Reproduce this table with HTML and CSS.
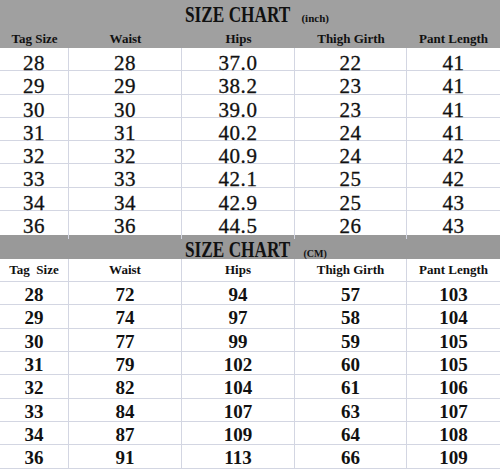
FILE: index.html
```html
<!DOCTYPE html>
<html>
<head>
<meta charset="utf-8">
<link rel="stylesheet" href="styles.css">
</head>
<body>
<section class="chart inch">
  <div class="band">
    <div class="title"><span class="big">SIZE CHART</span><span class="unit">(inch)</span></div>
    <div class="heads">
      <div>Tag Size</div><div>Waist</div><div>Hips</div><div>Thigh Girth</div><div>Pant Length</div>
    </div>
  </div>
  <div class="rows">
    <div class="row"><div>28</div><div>28</div><div>37.0</div><div>22</div><div>41</div></div>
    <div class="row"><div>29</div><div>29</div><div>38.2</div><div>23</div><div>41</div></div>
    <div class="row"><div>30</div><div>30</div><div>39.0</div><div>23</div><div>41</div></div>
    <div class="row"><div>31</div><div>31</div><div>40.2</div><div>24</div><div>41</div></div>
    <div class="row"><div>32</div><div>32</div><div>40.9</div><div>24</div><div>42</div></div>
    <div class="row"><div>33</div><div>33</div><div>42.1</div><div>25</div><div>42</div></div>
    <div class="row"><div>34</div><div>34</div><div>42.9</div><div>25</div><div>43</div></div>
    <div class="row"><div>36</div><div>36</div><div>44.5</div><div>26</div><div>43</div></div>
  </div>
</section>
<section class="chart cm">
  <div class="band">
    <div class="title"><span class="big">SIZE CHART</span><span class="unit">(CM)</span></div>
  </div>
  <div class="heads">
    <div>Tag&nbsp; Size</div><div>Waist</div><div>Hips</div><div>Thigh Girth</div><div>Pant Length</div>
  </div>
  <div class="rows">
    <div class="row"><div>28</div><div>72</div><div>94</div><div>57</div><div>103</div></div>
    <div class="row"><div>29</div><div>74</div><div>97</div><div>58</div><div>104</div></div>
    <div class="row"><div>30</div><div>77</div><div>99</div><div>59</div><div>105</div></div>
    <div class="row"><div>31</div><div>79</div><div>102</div><div>60</div><div>105</div></div>
    <div class="row"><div>32</div><div>82</div><div>104</div><div>61</div><div>106</div></div>
    <div class="row"><div>33</div><div>84</div><div>107</div><div>63</div><div>107</div></div>
    <div class="row"><div>34</div><div>87</div><div>109</div><div>64</div><div>108</div></div>
    <div class="row"><div>36</div><div>91</div><div>113</div><div>66</div><div>109</div></div>
  </div>
</section>
</body>
</html>
```
FILE: styles.css
```css
* { box-sizing: border-box; margin: 0; padding: 0; }
html, body { width: 500px; height: 469px; overflow: hidden; background: #fff; }
body { font-family: "Liberation Serif", "Times New Roman", serif; color: #111; }

.chart { width: 500px; }

.band { background: #a0a0a0; }
.cm .band { background: #999999; }

.title {
  height: 30px;
  display: flex;
  align-items: baseline;
  padding-left: 185px;
  padding-top: 4px;
  font-weight: bold;
  line-height: 22px;
  white-space: pre;
}
.big {
  display: inline-block;
  font-size: 23px;
  transform: scaleX(0.75);
  transform-origin: 0 0;
  margin-right: -24px;
}
.unit { font-size: 11px; }

.cm .band { height: 24px; }
.cm .title { height: 24px; padding-top: 4px; }
.cm .unit { font-size: 10px; margin-left: 2px; }

.heads, .row {
  display: grid;
  grid-template-columns: 69px 113px 113px 112px 93px;
}
.heads > div, .row > div {
  display: flex;
  align-items: center;
  justify-content: center;
}
.heads { height: 18px; font-size: 13px; font-weight: bold; }
.heads > div { padding-bottom: 1px; }

.cm .heads { height: 23px; border-bottom: 1px solid #d3d6e2; }
.cm .heads > div { border-right: 1px solid #d3d6e2; padding-bottom: 0; }
.cm .heads > div:last-child { border-right: 0; }

.row {
  height: 23.25px;
  border-bottom: 1px solid #d3d6e2;
}
.row > div { border-right: 1px solid #d3d6e2; padding-top: 3px; }
.row > div:last-child { border-right: 0; }

.inch .row { font-size: 21px; letter-spacing: 0.6px; -webkit-text-stroke: 0.3px #111; }
.inch .row:last-child { border-bottom: 0; height: 23px; }
.inch { margin-bottom: 1px; }

.cm .row { height: 23.4px; font-size: 19px; font-weight: bold; }
.cm .row > div { padding-top: 2px; }
```
